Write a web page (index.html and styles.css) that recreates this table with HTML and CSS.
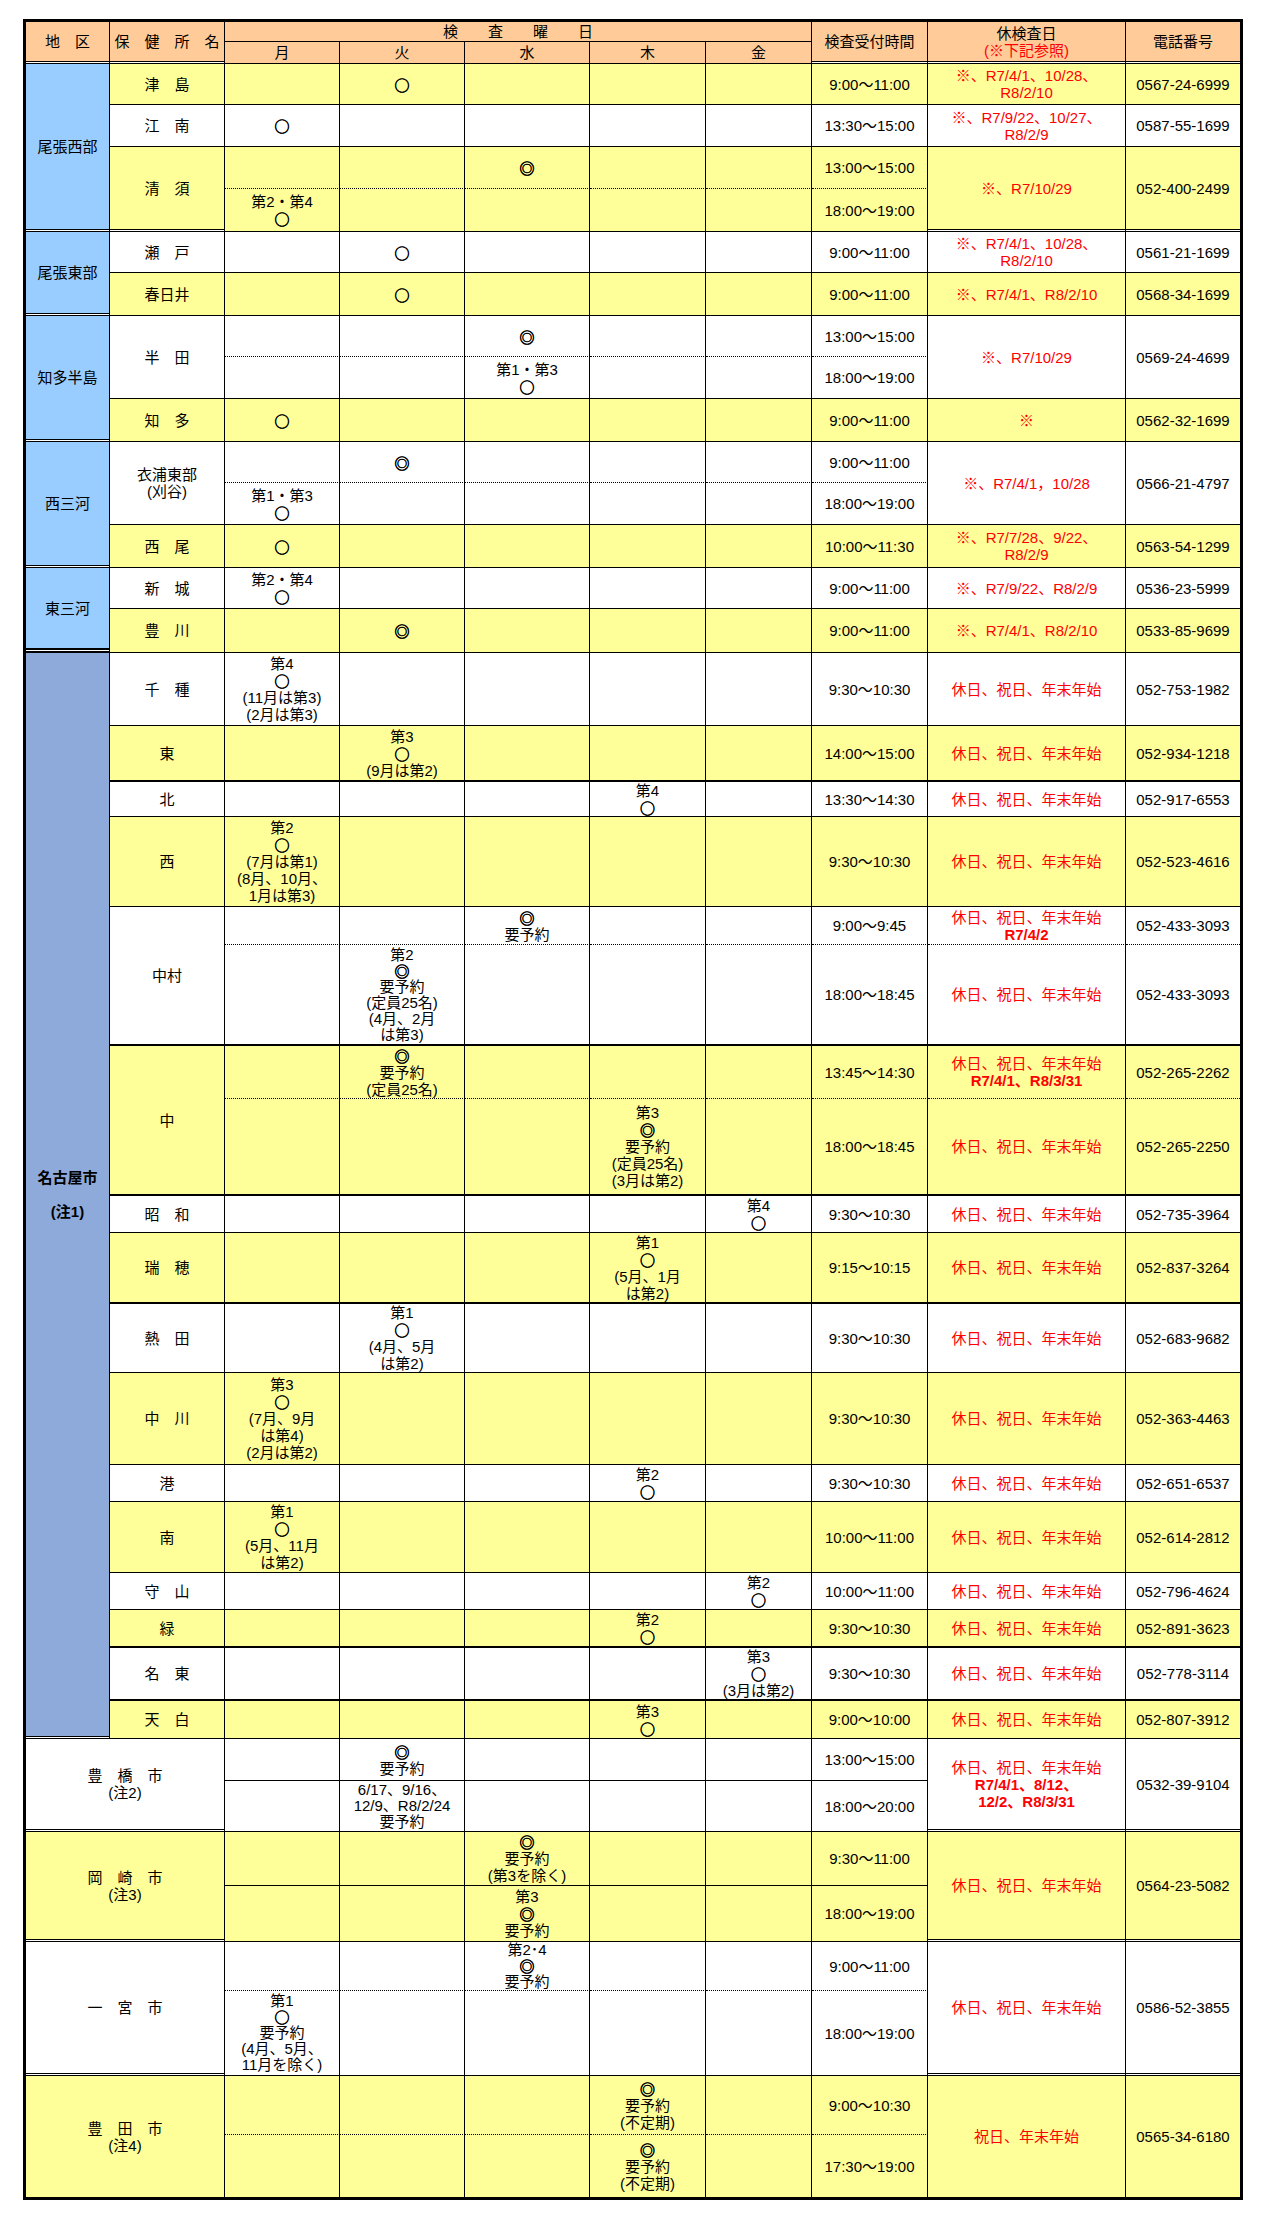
FILE: index.html
```html
<!DOCTYPE html>
<html lang="ja">
<head>
<meta charset="utf-8">
<title>検査日程</title>
<link rel="stylesheet" href="styles.css">
</head>
<body>
<div class="page">
<table class="sched">
<colgroup>
<col class="c-area"><col class="c-name"><col class="c-day"><col class="c-day2"><col class="c-day2"><col class="c-thu"><col class="c-fri"><col class="c-time"><col class="c-off"><col class="c-tel">
</colgroup>
<thead>
<tr class="h20">
<th rowspan="2" class="bd">地　区</th>
<th rowspan="2" class="bd">保　健　所　名</th>
<th colspan="5">検　　査　　曜　　日</th>
<th rowspan="2" class="bd">検査受付時間</th>
<th rowspan="2" class="bd">休検査日<br><span class="red">(※下記参照)</span></th>
<th rowspan="2" class="bd tel">電話番号</th>
</tr>
<tr class="h22 dbl">
<th>月</th><th>火</th><th>水</th><th>木</th><th>金</th>
</tr>
</thead>
<tbody>
<tr class="y h41">
<td rowspan="4" class="reg bd">尾張西部</td>
<td>津　島</td><td></td><td><span class="mk">○</span></td><td></td><td></td><td></td>
<td>9:00～11:00</td><td class="rb">※、R7/4/1、10/28、<br>R8/2/10</td><td class="tel">0567-24-6999</td>
</tr>
<tr class="h42">
<td>江　南</td><td><span class="mk">○</span></td><td></td><td></td><td></td><td></td>
<td>13:30～15:00</td><td class="rb">※、R7/9/22、10/27、<br>R8/2/9</td><td class="tel">0587-55-1699</td>
</tr>
<tr class="y h42 dot">
<td rowspan="2" class="bd">清　須</td><td></td><td></td><td><span class="mk">◎</span></td><td></td><td></td>
<td>13:00～15:00</td><td rowspan="2" class="rb bd">※、R7/10/29</td><td rowspan="2" class="tel bd">052-400-2499</td>
</tr>
<tr class="y h43 dbl">
<td>第2・第4<br><span class="mk">○</span></td><td></td><td></td><td></td><td></td><td>18:00～19:00</td>
</tr>

<tr class="h41">
<td rowspan="2" class="reg bd">尾張東部</td>
<td>瀬　戸</td><td></td><td><span class="mk">○</span></td><td></td><td></td><td></td>
<td>9:00～11:00</td><td class="rb">※、R7/4/1、10/28、<br>R8/2/10</td><td class="tel">0561-21-1699</td>
</tr>
<tr class="y h43 dbl">
<td>春日井</td><td></td><td><span class="mk">○</span></td><td></td><td></td><td></td>
<td>9:00～11:00</td><td class="rb">※、R7/4/1、R8/2/10</td><td class="tel">0568-34-1699</td>
</tr>

<tr class="h41 dot">
<td rowspan="3" class="reg bd">知多半島</td>
<td rowspan="2">半　田</td><td></td><td></td><td><span class="mk">◎</span></td><td></td><td></td>
<td>13:00～15:00</td><td rowspan="2" class="rb">※、R7/10/29</td><td rowspan="2" class="tel">0569-24-4699</td>
</tr>
<tr class="h42">
<td></td><td></td><td>第1・第3<br><span class="mk">○</span></td><td></td><td></td><td>18:00～19:00</td>
</tr>
<tr class="y h43 dbl">
<td>知　多</td><td><span class="mk">○</span></td><td></td><td></td><td></td><td></td>
<td>9:00～11:00</td><td class="rb">※</td><td class="tel">0562-32-1699</td>
</tr>

<tr class="h41 dot">
<td rowspan="3" class="reg bd">西三河</td>
<td rowspan="2">衣浦東部<br>(刈谷)</td><td></td><td><span class="mk">◎</span></td><td></td><td></td><td></td>
<td>9:00～11:00</td><td rowspan="2" class="rb">※、R7/4/1，10/28</td><td rowspan="2" class="tel">0566-21-4797</td>
</tr>
<tr class="h42">
<td>第1・第3<br><span class="mk">○</span></td><td></td><td></td><td></td><td></td><td>18:00～19:00</td>
</tr>
<tr class="y h43 dbl">
<td>西　尾</td><td><span class="mk">○</span></td><td></td><td></td><td></td><td></td>
<td>10:00～11:30</td><td class="rb">※、R7/7/28、9/22、<br>R8/2/9</td><td class="tel">0563-54-1299</td>
</tr>

<tr class="h41">
<td rowspan="2" class="reg bd5">東三河</td>
<td>新　城</td><td>第2・第4<br><span class="mk">○</span></td><td></td><td></td><td></td><td></td>
<td>9:00～11:00</td><td class="rb">※、R7/9/22、R8/2/9</td><td class="tel">0536-23-5999</td>
</tr>
<tr class="y h44 dbl5">
<td>豊　川</td><td></td><td><span class="mk">◎</span></td><td></td><td></td><td></td>
<td>9:00～11:00</td><td class="rb">※、R7/4/1、R8/2/10</td><td class="tel">0533-85-9699</td>
</tr>

<tr class="h73">
<td rowspan="18" class="ngy bd">名古屋市<br><br>(注1)</td>
<td>千　種</td><td>第4<br><span class="mk">○</span><br>(11月は第3)<br>(2月は第3)</td><td></td><td></td><td></td><td></td>
<td>9:30～10:30</td><td class="red">休日、祝日、年末年始</td><td class="tel">052-753-1982</td>
</tr>
<tr class="y h56 b2">
<td>東</td><td></td><td>第3<br><span class="mk">○</span><br>(9月は第2)</td><td></td><td></td><td></td>
<td>14:00～15:00</td><td class="red">休日、祝日、年末年始</td><td class="tel">052-934-1218</td>
</tr>
<tr class="h35">
<td>北</td><td></td><td></td><td></td><td>第4<br><span class="mk">○</span></td><td></td>
<td>13:30～14:30</td><td class="red">休日、祝日、年末年始</td><td class="tel">052-917-6553</td>
</tr>
<tr class="y h90">
<td>西</td><td>第2<br><span class="mk">○</span><br>(7月は第1)<br>(8月、10月、<br>1月は第3)</td><td></td><td></td><td></td><td></td>
<td>9:30～10:30</td><td class="red">休日、祝日、年末年始</td><td class="tel">052-523-4616</td>
</tr>
<tr class="h38 dot">
<td rowspan="2" class="b2c">中村</td><td></td><td></td><td><span class="mk">◎</span><br>要予約</td><td></td><td></td>
<td>9:00～9:45</td><td class="red">休日、祝日、年末年始<br><b>R7/4/2</b></td><td class="tel">052-433-3093</td>
</tr>
<tr class="h101 b2">
<td></td><td class="tight">第2<br><span class="mk">◎</span><br>要予約<br>(定員25名)<br>(4月、2月<br>は第3)</td><td></td><td></td><td></td>
<td>18:00～18:45</td><td class="red">休日、祝日、年末年始</td><td class="tel">052-433-3093</td>
</tr>
<tr class="y h53 dot">
<td rowspan="2" class="b2c">中</td><td></td><td><span class="mk">◎</span><br>要予約<br>(定員25名)</td><td></td><td></td><td></td>
<td>13:45～14:30</td><td class="red">休日、祝日、年末年始<br><b>R7/4/1、R8/3/31</b></td><td class="tel">052-265-2262</td>
</tr>
<tr class="y h97 b2">
<td></td><td></td><td></td><td>第3<br><span class="mk">◎</span><br>要予約<br>(定員25名)<br>(3月は第2)</td><td></td>
<td>18:00～18:45</td><td class="red">休日、祝日、年末年始</td><td class="tel">052-265-2250</td>
</tr>
<tr class="h37">
<td>昭　和</td><td></td><td></td><td></td><td></td><td>第4<br><span class="mk">○</span></td>
<td>9:30～10:30</td><td class="red">休日、祝日、年末年始</td><td class="tel">052-735-3964</td>
</tr>
<tr class="y h71 b2">
<td>瑞　穂</td><td></td><td></td><td></td><td>第1<br><span class="mk">○</span><br>(5月、1月<br>は第2)</td><td></td>
<td>9:15～10:15</td><td class="red">休日、祝日、年末年始</td><td class="tel">052-837-3264</td>
</tr>
<tr class="h68">
<td>熱　田</td><td></td><td>第1<br><span class="mk">○</span><br>(4月、5月<br>は第2)</td><td></td><td></td><td></td>
<td>9:30～10:30</td><td class="red">休日、祝日、年末年始</td><td class="tel">052-683-9682</td>
</tr>
<tr class="y h92">
<td>中　川</td><td>第3<br><span class="mk">○</span><br>(7月、9月<br>は第4)<br>(2月は第2)</td><td></td><td></td><td></td><td></td>
<td>9:30～10:30</td><td class="red">休日、祝日、年末年始</td><td class="tel">052-363-4463</td>
</tr>
<tr class="h37">
<td>港</td><td></td><td></td><td></td><td>第2<br><span class="mk">○</span></td><td></td>
<td>9:30～10:30</td><td class="red">休日、祝日、年末年始</td><td class="tel">052-651-6537</td>
</tr>
<tr class="y h71">
<td>南</td><td>第1<br><span class="mk">○</span><br>(5月、11月<br>は第2)</td><td></td><td></td><td></td><td></td>
<td>10:00～11:00</td><td class="red">休日、祝日、年末年始</td><td class="tel">052-614-2812</td>
</tr>
<tr class="h37">
<td>守　山</td><td></td><td></td><td></td><td></td><td>第2<br><span class="mk">○</span></td>
<td>10:00～11:00</td><td class="red">休日、祝日、年末年始</td><td class="tel">052-796-4624</td>
</tr>
<tr class="y h38 b2">
<td>緑</td><td></td><td></td><td></td><td>第2<br><span class="mk">○</span></td><td></td>
<td>9:30～10:30</td><td class="red">休日、祝日、年末年始</td><td class="tel">052-891-3623</td>
</tr>
<tr class="h52 b2">
<td>名　東</td><td></td><td></td><td></td><td></td><td>第3<br><span class="mk">○</span><br>(3月は第2)</td>
<td>9:30～10:30</td><td class="red">休日、祝日、年末年始</td><td class="tel">052-778-3114</td>
</tr>
<tr class="y h38 dbl">
<td>天　白</td><td></td><td></td><td></td><td>第3<br><span class="mk">○</span></td><td></td>
<td>9:00～10:00</td><td class="red">休日、祝日、年末年始</td><td class="tel">052-807-3912</td>
</tr>

<tr class="h42">
<td colspan="2" rowspan="2" class="bd">豊　橋　市<br>(注2)</td>
<td></td><td><span class="mk">◎</span><br>要予約</td><td></td><td></td><td></td>
<td>13:00～15:00</td>
<td rowspan="2" class="red bd">休日、祝日、年末年始<br><b>R7/4/1、8/12、<br>12/2、R8/3/31</b></td>
<td rowspan="2" class="tel bd">0532-39-9104</td>
</tr>
<tr class="h51 dbl">
<td></td><td class="tight">6/17、9/16、<br>12/9、R8/2/24<br>要予約</td><td></td><td></td><td></td><td>18:00～20:00</td>
</tr>

<tr class="y h54">
<td colspan="2" rowspan="2" class="bd">岡　崎　市<br>(注3)</td>
<td></td><td></td><td><span class="mk">◎</span><br>要予約<br>(第3を除く)</td><td></td><td></td>
<td>9:30～11:00</td><td rowspan="2" class="red bd">休日、祝日、年末年始</td><td rowspan="2" class="tel bd">0564-23-5082</td>
</tr>
<tr class="y h56 dbl">
<td></td><td></td><td>第3<br><span class="mk">◎</span><br>要予約</td><td></td><td></td><td>18:00～19:00</td>
</tr>

<tr class="h49 dot">
<td colspan="2" rowspan="2" class="bd">一　宮　市</td>
<td></td><td></td><td class="tight">第2･4<br><span class="mk">◎</span><br>要予約</td><td></td><td></td>
<td>9:00～11:00</td><td rowspan="2" class="red bd">休日、祝日、年末年始</td><td rowspan="2" class="tel bd">0586-52-3855</td>
</tr>
<tr class="h85 dbl">
<td class="tight">第1<br><span class="mk">○</span><br>要予約<br>(4月、5月、<br>11月を除く)</td><td></td><td></td><td></td><td></td><td>18:00～19:00</td>
</tr>

<tr class="y h59 dot">
<td colspan="2" rowspan="2" class="end">豊　田　市<br>(注4)</td>
<td></td><td></td><td></td><td><span class="mk">◎</span><br>要予約<br>(不定期)</td><td></td>
<td>9:00～10:30</td><td rowspan="2" class="red end">祝日、年末年始</td><td rowspan="2" class="tel end">0565-34-6180</td>
</tr>
<tr class="y h62 end">
<td></td><td></td><td></td><td><span class="mk">◎</span><br>要予約<br>(不定期)</td><td></td><td>17:30～19:00</td>
</tr>
</tbody>
</table>
</div>
</body>
</html>
```
FILE: styles.css
```css
* { box-sizing: border-box; }

body {
  margin: 0;
  background: #ffffff;
  color: #000000;
  font-family: "Liberation Sans", "Noto Sans CJK JP", sans-serif;
  font-size: 15px;
  line-height: 17px;
}

.page {
  padding: 19px 0 40px 23px;
}

.sched {
  border-collapse: separate;
  border-spacing: 0;
  table-layout: fixed;
  width: 1220px;
  border: 3px solid #000;
  background: #ffffff;
}

.sched col.c-area { width: 84px; }
.sched col.c-name { width: 115px; }
.sched col.c-day { width: 115px; }
.sched col.c-day2 { width: 125px; }
.sched col.c-thu { width: 116px; }
.sched col.c-fri { width: 106px; }
.sched col.c-time { width: 116px; }
.sched col.c-off { width: 198px; }
.sched col.c-tel { width: 114px; }

.sched th,
.sched td {
  padding: 0;
  text-align: center;
  vertical-align: middle;
  white-space: nowrap;
  font-weight: normal;
  border-right: 1px solid #000;
  border-bottom: 1px solid #000;
}

.sched th {
  background-color: #ffcc99;
}

.y > td { background-color: #ffff99; }
.sched td.reg { background-color: #99ccff; }
.sched td.ngy { background-color: #8eaadb; font-weight: bold; }

.sched .tel { border-right: none; }

/* row bottom lines */
.dot > td:not([rowspan]) { border-bottom: 1px dotted #000; }
.b2 > td, .sched td.b2c { border-bottom-width: 2px; }
.dbl > *, .sched .bd {
  border-bottom: 3px double #000;
  background-clip: padding-box;
}
.dbl5 > *, .sched .bd5 {
  border-bottom: 5px double #000;
  background-clip: padding-box;
}
.end > td, .sched td.end { border-bottom: none; }

.red { color: #ff0000; }
.rb { color: #ff0000; font-weight: bold; }
.tight { line-height: 16px; }

.mk {
  font-family: "Noto Sans CJK JP", sans-serif;
  font-size: 15px;
  color: #000;
  -webkit-text-stroke: 0.6px #000;
  vertical-align: top;
}

.h20 { height: 20px; }
.h22 { height: 22px; }
.h35 { height: 35px; }
.h37 { height: 37px; }
.h38 { height: 38px; }
.h41 { height: 41px; }
.h42 { height: 42px; }
.h43 { height: 43px; }
.h44 { height: 44px; }
.h49 { height: 49px; }
.h51 { height: 51px; }
.h52 { height: 52px; }
.h53 { height: 53px; }
.h54 { height: 54px; }
.h56 { height: 56px; }
.h59 { height: 59px; }
.h62 { height: 62px; }
.h68 { height: 68px; }
.h71 { height: 71px; }
.h73 { height: 73px; }
.h85 { height: 85px; }
.h90 { height: 90px; }
.h92 { height: 92px; }
.h97 { height: 97px; }
.h101 { height: 101px; }
```
